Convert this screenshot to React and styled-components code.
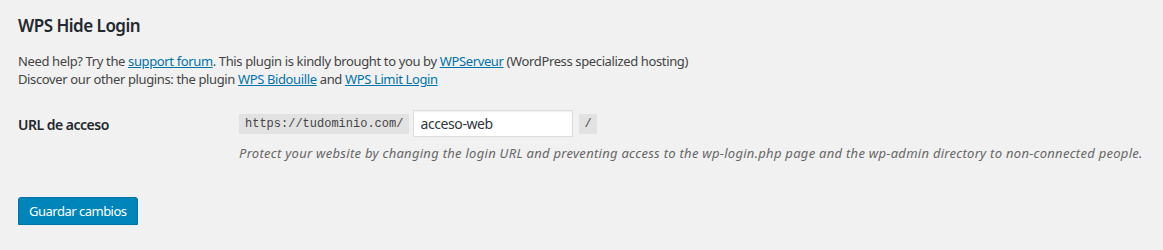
import React from "react"
import styled, { createGlobalStyle } from "styled-components"

const GlobalStyle = createGlobalStyle`
  html, body {
    margin: 0;
    padding: 0;
    background: #f1f1f1;
  }
  body {
    font-family: "Noto Sans", "Open Sans", sans-serif;
    font-size: 13px;
    line-height: 1.4em;
    color: #444;
  }
`

const Wrap = styled.div`
  padding: 0 18px;
`

const Title = styled.h2`
  margin: 0;
  padding-top: 15px;
  font-size: 17px;
  line-height: 22px;
  font-weight: 600;
  letter-spacing: -0.5px;
  color: #23282d;
`

const Intro = styled.p`
  margin: 15px 0 0;
  font-size: 13px;
  line-height: 18px;
  letter-spacing: -0.37px;
`

const Link = styled.a`
  color: #0073aa;
  text-decoration: underline;
`

const Row = styled.div`
  display: flex;
  margin-top: 22px;
`

const Label = styled.div`
  width: 221px;
  flex-shrink: 0;
  padding-top: 6px;
  font-size: 14px;
  font-weight: 600;
  letter-spacing: -0.5px;
  color: #23282d;
`

const Field = styled.div`
  display: flex;
  flex-direction: column;
`

const Inline = styled.div`
  display: flex;
  align-items: center;
  gap: 4px;
`

const Code = styled.code`
  display: block;
  height: 20px;
  padding: 0 ${({ pad }) => pad || 5}px;
  background: #e2e2e2;
  font-family: "Liberation Mono", monospace;
  font-size: 12px;
  line-height: 21px;
  color: #444;
`

const Input = styled.input`
  box-sizing: border-box;
  width: 160px;
  height: 27px;
  margin: 0 2px 0 0;
  padding: 0 6px;
  border: 1px solid #ddd;
  box-shadow: inset 0 1px 2px rgba(0, 0, 0, 0.07);
  background: #fff;
  font-family: "Noto Sans", sans-serif;
  font-size: 14px;
  letter-spacing: -0.4px;
  color: #32373c;
  outline: none;
`

const Description = styled.p`
  margin: 7px 0 0;
  font-size: 13px;
  line-height: 18px;
  font-style: italic;
  letter-spacing: 0.28px;
  color: #666;
`

const Button = styled.button`
  margin-top: 35px;
  height: 28px;
  padding: 0 10px 1px;
  border: 1px solid #0073aa;
  border-radius: 3px;
  background: #0085ba;
  box-shadow: 0 1px 0 #006799;
  color: #fff;
  font-family: "Noto Sans", sans-serif;
  font-size: 13px;
  letter-spacing: -0.5px;
  line-height: 26px;
  cursor: pointer;
`

export default function App() {
  return (
    <Wrap>
      <GlobalStyle />
      <Title>WPS Hide Login</Title>
      <Intro>
        Need help? Try the <Link href="#">support forum</Link>. This plugin is kindly brought to you by{" "}
        <Link href="#">WPServeur</Link> (WordPress specialized hosting)
        <br />
        Discover our other plugins: the plugin <Link href="#">WPS Bidouille</Link> and{" "}
        <Link href="#">WPS Limit Login</Link>
      </Intro>
      <Row>
        <Label>URL de acceso</Label>
        <Field>
          <Inline>
            <Code pad={6}>https://tudominio.com/</Code>
            <Input defaultValue="acceso-web" />
            <Code>/</Code>
          </Inline>
          <Description>
            Protect your website by changing the login URL and preventing access to the wp-login.php page and the
            wp-admin directory to non-connected people.
          </Description>
        </Field>
      </Row>
      <Button>Guardar cambios</Button>
    </Wrap>
  )
}
